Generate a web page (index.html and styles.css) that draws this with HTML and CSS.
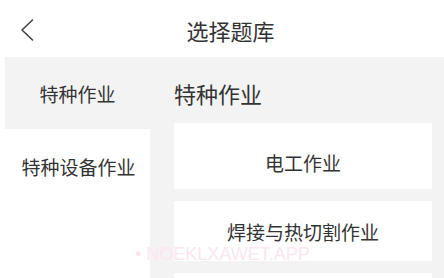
FILE: index.html
```html
<!DOCTYPE html>
<html lang="zh">
<head>
<meta charset="utf-8">
<title>选择题库</title>
<link rel="stylesheet" href="styles.css">
</head>
<body>
<div class="page">
  <header class="header">
    <div class="back">
      <svg width="16" height="24" viewBox="0 0 16 24"><path d="M12.5 2 L2 12 L12.5 22" fill="none" stroke="#444" stroke-width="1.6" stroke-linecap="round" stroke-linejoin="round"/></svg>
    </div>
    <div class="title">选择题库</div>
  </header>
  <main class="main">
    <nav class="side">
      <div class="side-item">特种作业</div>
      <div class="side-item active">特种设备作业</div>
    </nav>
    <section class="content">
      <div class="heading">特种作业</div>
      <div class="cards">
        <div class="card first">电工作业</div>
        <div class="card">焊接与热切割作业</div>
        <div class="card"></div>
      </div>
    </section>
  </main>
  <div class="watermark">• NOEKLXAWET.APP</div>
</div>
</body>
</html>
```

FILE: styles.css
```css
* { box-sizing: border-box; margin: 0; padding: 0; }
html, body { width: 444px; height: 278px; overflow: hidden; background: #fff; }
body {
  font-family: "Noto Sans CJK SC", "Noto Sans", sans-serif;
  color: #333;
}
.page { position: relative; width: 444px; height: 278px; overflow: hidden; }
.header {
  height: 57px;
  display: flex;
  align-items: center;
  padding-top: 8px;
}
.back {
  width: 44px;
  display: flex;
  align-items: center;
  padding-left: 20px;
}
.back svg { display: block; margin-top: -6px; }
.title {
  flex: 1;
  text-align: center;
  padding-right: 27px;
  font-size: 22px;
  line-height: 30px;
  color: #333;
  margin-top: -6px;
}
.main {
  display: flex;
  height: 221px;
  margin-left: 5px;
  background: #f3f3f3;
  overflow: hidden;
}
.side {
  width: 145px;
  flex-shrink: 0;
  display: flex;
  flex-direction: column;
}
.side-item {
  height: 72px;
  flex-shrink: 0;
  display: flex;
  align-items: center;
  justify-content: center;
  font-size: 19px;
  color: #333;
}
.side-item.active {
  flex: 1;
  align-items: flex-start;
  background: #fff;
  padding-top: 24px;
  padding-left: 2px;
}
.content {
  flex: 1;
  display: flex;
  flex-direction: column;
  padding-left: 24px;
  padding-right: 12px;
}
.heading {
  height: 66px;
  flex-shrink: 0;
  display: flex;
  align-items: center;
  padding-top: 6px;
  font-size: 22px;
  color: #333;
}
.cards {
  display: flex;
  flex-direction: column;
  gap: 12px;
  flex-shrink: 0;
}
.card {
  height: 60px;
  flex-shrink: 0;
  background: #fff;
  display: flex;
  align-items: center;
  justify-content: center;
  font-size: 19px;
  color: #333;
}
.card.first { height: 66px; padding-top: 12px; }
.watermark {
  position: absolute;
  left: 135px;
  top: 242px;
  font-family: "Liberation Sans", Arial, sans-serif;
  font-size: 18px;
  line-height: 24px;
  color: #fce6f2;
  white-space: nowrap;
}
```
